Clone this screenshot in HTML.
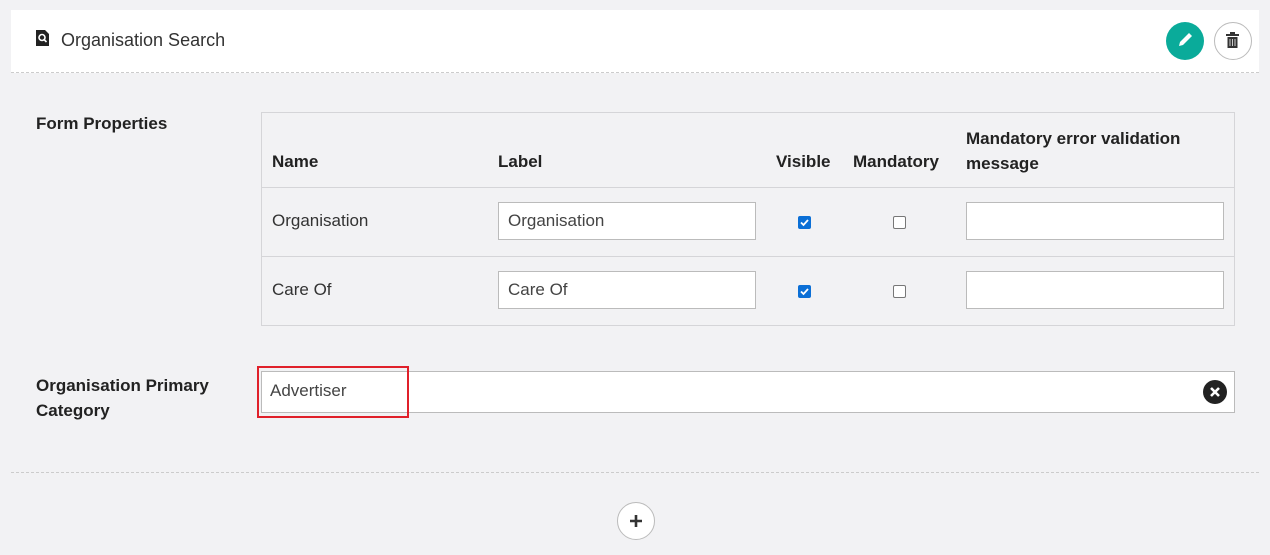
<!DOCTYPE html>
<html><head><style>
body{margin:0;width:1270px;height:555px;background:#f2f2f4;font-family:"Liberation Sans",sans-serif;color:#333;position:relative;overflow:hidden}
.a{position:absolute}
.card{left:11px;top:10px;width:1248px;height:62px;background:#fff;border-bottom:1px dashed #ccc}
.t{font-size:18px;color:#333}
.b{font-weight:bold;font-size:17px;color:#222}
.inp{position:absolute;background:#fff;border:1px solid #bbb;height:38px;box-sizing:border-box;font-size:17px;padding:8px 9px;color:#444}
.cb{position:absolute;width:13px;height:13px;border:1px solid #777;border-radius:2px;background:#fff;box-sizing:border-box}
.cb.on{background:#0b6fd6;border-color:#0b6fd6}
</style></head><body>
<div class="a card"></div>
<svg class="a" style="left:36px;top:30px" width="13" height="16" viewBox="0 0 13 16"><path d="M0 0h9l4 4v12H0z" fill="#222"/><circle cx="6" cy="7.5" r="3" fill="none" stroke="#fff" stroke-width="1.6"/><path d="M8 9.5l2.5 2.5" stroke="#fff" stroke-width="1.6"/></svg>
<div class="a t" style="left:61px;top:30px">Organisation Search</div>
<div class="a" style="left:1166px;top:22px;width:38px;height:38px;border-radius:50%;background:#0aab9a"></div>
<svg class="a" style="left:1176px;top:31px" width="18" height="18" viewBox="0 0 18 18"><path d="M3 15l1-4 9-9 3 3-9 9z" fill="#fff"/></svg>
<div class="a" style="left:1214px;top:22px;width:36px;height:36px;border-radius:50%;border:1px solid #bbb;background:#fff"></div>
<svg class="a" style="left:1225px;top:31px" width="16" height="18" viewBox="0 0 16 18"><rect x="1" y="3" width="13" height="2" fill="#333"/><rect x="5" y="1" width="5" height="2" fill="#333"/><rect x="2.5" y="6" width="10" height="11" fill="#333"/><path d="M5 8v7M7.5 8v7M10 8v7" stroke="#ccc" stroke-width="1"/></svg>
<div class="a b" style="left:36px;top:114px">Form Properties</div>
<div class="a" style="left:261px;top:112px;width:972px;height:212px;border:1px solid #d5d5d8"></div>
<div class="a" style="left:262px;top:187px;width:972px;border-top:1px solid #d5d5d8"></div>
<div class="a" style="left:262px;top:256px;width:972px;border-top:1px solid #d5d5d8"></div>
<div class="a b" style="left:272px;top:152px">Name</div>
<div class="a b" style="left:498px;top:152px">Label</div>
<div class="a b" style="left:776px;top:152px">Visible</div>
<div class="a b" style="left:853px;top:152px">Mandatory</div>
<div class="a b" style="left:966px;top:126px;line-height:25px">Mandatory error validation<br>message</div>
<div class="a t" style="left:272px;top:211px;font-size:17px">Organisation</div>
<div class="inp" style="left:498px;top:202px;width:258px">Organisation</div>
<div class="cb on" style="left:798px;top:216px"></div><svg class="a" style="left:798px;top:216px" width="13" height="13"><path d="M3 6.5l2.5 2.5 4.5-5" stroke="#fff" stroke-width="1.8" fill="none"/></svg>
<div class="cb" style="left:893px;top:216px"></div>
<div class="inp" style="left:966px;top:202px;width:258px"></div>
<div class="a t" style="left:272px;top:280px;font-size:17px">Care Of</div>
<div class="inp" style="left:498px;top:271px;width:258px">Care Of</div>
<div class="cb on" style="left:798px;top:285px"></div><svg class="a" style="left:798px;top:285px" width="13" height="13"><path d="M3 6.5l2.5 2.5 4.5-5" stroke="#fff" stroke-width="1.8" fill="none"/></svg>
<div class="cb" style="left:893px;top:285px"></div>
<div class="inp" style="left:966px;top:271px;width:258px"></div>
<div class="a b" style="left:36px;top:373px;line-height:25px">Organisation Primary<br>Category</div>
<div class="inp" style="left:261px;top:371px;width:974px;height:42px;padding:9px 9px"></div>
<div class="a" style="left:257px;top:366px;width:148px;height:48px;border:2px solid #e0202a"></div>
<div class="a t" style="left:270px;top:381px;font-size:17px;color:#444">Advertiser</div>
<div class="a" style="left:1203px;top:380px;width:24px;height:24px;border-radius:50%;background:#222"></div>
<svg class="a" style="left:1203px;top:380px" width="24" height="24"><path d="M8 8l8 8M16 8l-8 8" stroke="#fff" stroke-width="2.6"/></svg>
<div class="a" style="left:11px;top:472px;width:1248px;border-top:1px dashed #ccc"></div>
<div class="a" style="left:617px;top:502px;width:36px;height:36px;border-radius:50%;border:1px solid #bbb;background:#fff"></div>
<svg class="a" style="left:627px;top:512px" width="18" height="18"><path d="M9 3v12M3 9h12" stroke="#333" stroke-width="2.6"/></svg>
</body></html>
